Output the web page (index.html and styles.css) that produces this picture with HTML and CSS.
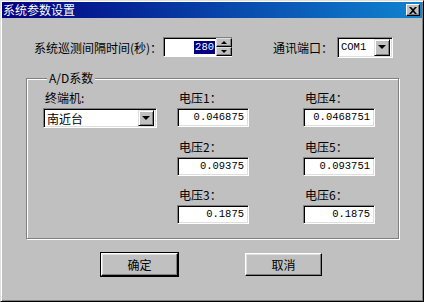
FILE: index.html
```html
<!DOCTYPE html>
<html lang="zh-CN">
<head>
    <meta charset="UTF-8">
    <title>系统参数设置</title>
    <link rel="stylesheet" href="styles.css">
</head>
<body>
    <div class="window">
        <div class="titlebar">
            <span class="title">系统参数设置</span>
            <span class="close-btn">
                <svg width="8" height="7" viewBox="0 0 8 7"><path d="M0 0h2l2 2 2-2h2L5 3.5 8 7H6L4 5 2 7H0l3-3.5z" fill="#000"/></svg>
            </span>
        </div>

        <div class="top-row">
            <span class="lbl-interval">系统巡测间隔时间(秒)：</span>
            <div class="spin">
                <div class="field spin-field"><span class="sel">280</span></div>
                <div class="spin-btns">
                    <span class="spin-btn"><i class="arrow-up"></i></span>
                    <span class="spin-btn"><i class="arrow-down"></i></span>
                </div>
            </div>
            <span class="lbl-port">通讯端口：</span>
            <div class="field combo combo-port">
                <span class="combo-text mono">COM1</span>
                <span class="combo-btn"><i class="arrow-down"></i></span>
            </div>
        </div>

        <fieldset class="group">
            <legend>A/D系数</legend>
            <div class="grid">
                <div class="cell">
                    <div class="lbl">终端机:</div>
                    <div class="field combo combo-term">
                        <span class="combo-text">南近台</span>
                        <span class="combo-btn"><i class="arrow-down"></i></span>
                    </div>
                </div>
                <div class="cell">
                    <div class="lbl">电压1：</div>
                    <div class="field value mono">0.046875</div>
                </div>
                <div class="cell">
                    <div class="lbl">电压4：</div>
                    <div class="field value mono">0.0468751</div>
                </div>

                <div class="cell"></div>
                <div class="cell">
                    <div class="lbl">电压2：</div>
                    <div class="field value mono">0.09375</div>
                </div>
                <div class="cell">
                    <div class="lbl">电压5：</div>
                    <div class="field value mono">0.093751</div>
                </div>

                <div class="cell"></div>
                <div class="cell">
                    <div class="lbl">电压3：</div>
                    <div class="field value mono">0.1875</div>
                </div>
                <div class="cell">
                    <div class="lbl">电压6：</div>
                    <div class="field value mono">0.1875</div>
                </div>
            </div>
        </fieldset>

        <div class="buttons">
            <button class="btn btn-default">确定</button>
            <button class="btn">取消</button>
        </div>
    </div>
</body>
</html>
```

FILE: styles.css
```css
body {
    margin: 0;
    font-family: "Noto Sans CJK SC", "DejaVu Sans", sans-serif;
    font-size: 12px;
    color: #000;
    background-color: #c0c0c0;
}

.window {
    width: 424px;
    height: 302px;
    box-sizing: border-box;
    background-color: #c0c0c0;
    border: 1px solid;
    border-color: #dfdfdf #000 #000 #dfdfdf;
    box-shadow: inset 1px 1px 0 #fff, inset -1px -1px 0 #808080;
    padding: 1px;
    display: flex;
    flex-direction: column;
}

/* title bar */
.titlebar {
    height: 16px;
    flex-shrink: 0;
    display: flex;
    align-items: center;
    justify-content: space-between;
    padding: 0 2px 0 1px;
    background: linear-gradient(to right, #000080, #1084d0);
    color: #fff;
}

.title {
    line-height: 16px;
    font-size: 12px;
}

.close-btn {
    width: 14px;
    height: 12px;
    box-sizing: border-box;
    display: flex;
    align-items: center;
    justify-content: center;
    background-color: #c0c0c0;
    border: 1px solid;
    border-color: #fff #000 #000 #fff;
    box-shadow: inset -1px -1px 0 #808080;
}

/* sunken field */
.field {
    box-sizing: border-box;
    background-color: #fff;
    border: 1px solid;
    border-color: #808080 #fff #fff #808080;
    box-shadow: inset 1px 1px 0 #000, inset -1px -1px 0 #dfdfdf;
}

.mono {
    font-family: "Liberation Mono", "DejaVu Sans Mono", monospace;
    font-size: 10.5px;
}

/* first row */
.top-row {
    display: flex;
    align-items: center;
    flex-shrink: 0;
    margin-top: 19px;
    padding-left: 32px;
    height: 20px;
}

.lbl-interval {
    width: 129px;
}

.spin {
    width: 69px;
    height: 20px;
    display: flex;
}

.spin-field {
    flex: 1;
    height: 20px;
    display: flex;
    align-items: center;
    justify-content: flex-end;
    padding-right: 1px;
    border-right: none;
    box-shadow: inset 1px 1px 0 #000;
    font-family: "Liberation Mono", "DejaVu Sans Mono", monospace;
    font-size: 10.5px;
}

.sel {
    background-color: #000080;
    color: #fff;
    line-height: 13px;
    padding: 0 1px;
}

.spin-btns {
    width: 16px;
    height: 20px;
    box-sizing: border-box;
    display: flex;
    flex-direction: column;
    border-top: 1px solid #808080;
    border-bottom: 1px solid #fff;
    background-color: #fff;
}

.spin-btn {
    flex: 1;
    display: flex;
    align-items: center;
    justify-content: center;
    background-color: #c0c0c0;
    border: 1px solid;
    border-color: #dfdfdf #000 #000 #dfdfdf;
    box-shadow: inset -1px -1px 0 #808080;
}

.arrow-up,
.arrow-down {
    width: 0;
    height: 0;
    border-left: 3px solid transparent;
    border-right: 3px solid transparent;
}

.arrow-up {
    border-bottom: 3px solid #000;
}

.arrow-down {
    border-top: 3px solid #000;
}

.lbl-port {
    margin-left: 41px;
    width: 64px;
}

/* combo box */
.combo {
    height: 21px;
    display: flex;
    align-items: center;
    justify-content: space-between;
    padding: 2px;
}

.combo-port {
    width: 56px;
}

.combo-text {
    padding-left: 1px;
    line-height: 15px;
}

.combo-btn {
    width: 16px;
    height: 17px;
    box-sizing: border-box;
    display: flex;
    align-items: center;
    justify-content: center;
    background-color: #c0c0c0;
    border: 1px solid;
    border-color: #dfdfdf #000 #000 #dfdfdf;
    box-shadow: inset 1px 1px 0 #fff, inset -1px -1px 0 #808080;
}

.combo-btn .arrow-down {
    border-left-width: 4px;
    border-right-width: 4px;
    border-top-width: 4px;
}

/* A/D group */
.group {
    margin: 14px 0 0 24px;
    width: 373px;
    box-sizing: border-box;
    padding: 0 0 14px 16px;
    border: 1px solid #808080;
    box-shadow: inset 1px 1px 0 #fff, 1px 1px 0 #fff;
    min-inline-size: 0;
    flex-shrink: 0;
}

.group legend {
    padding: 0 2px;
    margin-left: 4px;
    line-height: 14px;
    background-color: #c0c0c0;
}

.grid {
    display: grid;
    grid-template-columns: 114px 106px 72px;
    column-gap: 20px;
    row-gap: 12px;
    margin-top: 6px;
}

.lbl {
    line-height: 14px;
    height: 14px;
    margin-bottom: 3px;
    padding-left: 2px;
    white-space: nowrap;
}

.combo-term {
    width: 114px;
    height: 20px;
}

.combo-term .combo-btn {
    height: 16px;
}

.value {
    width: 72px;
    height: 19px;
    line-height: 17px;
    text-align: right;
    padding-right: 4px;
}

/* bottom buttons */
.buttons {
    display: flex;
    flex-shrink: 0;
    gap: 67px;
    margin-top: 14px;
    padding-left: 99px;
}

.btn {
    width: 77px;
    height: 23px;
    box-sizing: border-box;
    font-family: "Noto Sans CJK SC", sans-serif;
    font-size: 12px;
    color: #000;
    background-color: #c0c0c0;
    border: 1px solid;
    border-color: #fff #000 #000 #fff;
    box-shadow: inset -1px -1px 0 #808080, inset 1px 1px 0 #dfdfdf;
    padding: 0;
}

.btn-default {
    outline: 1px solid #000;
}
```
